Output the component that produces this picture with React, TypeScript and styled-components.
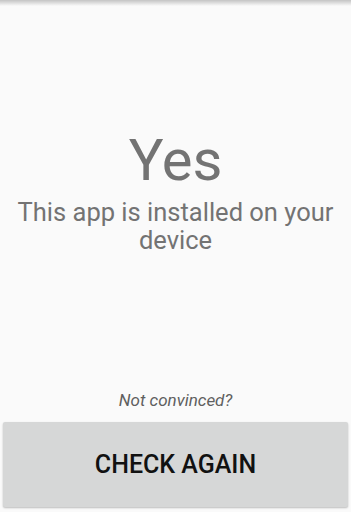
import React from 'react';
import { styled, createGlobalStyle } from 'styled-components';

const GlobalStyle = createGlobalStyle`
  html, body {
    margin: 0;
    padding: 0;
    background: #fafafa;
  }
  body {
    font-family: Roboto, "Noto Sans", sans-serif;
  }
`;

const Screen = styled.div`
  position: relative;
  display: flex;
  flex-direction: column;
  height: 512px;
  background: #fafafa;
`;

const TopShadow = styled.div`
  position: absolute;
  top: 0;
  left: 0;
  right: 0;
  height: 6px;
  background: linear-gradient(to bottom, rgba(0, 0, 0, 0.22), rgba(0, 0, 0, 0));
`;

const Main = styled.main`
  flex: 1;
  display: flex;
  flex-direction: column;
  align-items: center;
  justify-content: center;
  padding-bottom: 11px;
`;

const Answer = styled.h1`
  margin: 0;
  font-size: 58px;
  line-height: 68px;
  font-weight: 400;
  color: #737373;
`;

const Message = styled.p`
  margin: 4px 0 0;
  padding: 0 10px;
  font-size: 25.5px;
  line-height: 28px;
  font-weight: 400;
  text-align: center;
  color: #737373;
`;

const Footer = styled.footer`
  display: flex;
  flex-direction: column;
  align-items: stretch;
  padding: 0 3px 5px;
`;

const Hint = styled.p`
  margin: 0 0 12px;
  font-size: 17px;
  line-height: 19px;
  font-style: italic;
  text-align: center;
  color: #5f5f5f;
`;

const CheckButton = styled.button`
  height: 85px;
  border: none;
  border-radius: 2px;
  background: #d6d7d7;
  box-shadow: 0 1px 2px rgba(0, 0, 0, 0.25);
  font-family: Roboto, "Noto Sans", sans-serif;
  font-size: 25px;
  font-weight: 500;
  color: #111;
  text-transform: uppercase;
  cursor: pointer;
`;

export default function App() {
  return (
    <>
      <GlobalStyle />
      <Screen>
        <TopShadow />
        <Main>
          <Answer>Yes</Answer>
          <Message>This app is installed on your device</Message>
        </Main>
        <Footer>
          <Hint>Not convinced?</Hint>
          <CheckButton>Check again</CheckButton>
        </Footer>
      </Screen>
    </>
  );
}
